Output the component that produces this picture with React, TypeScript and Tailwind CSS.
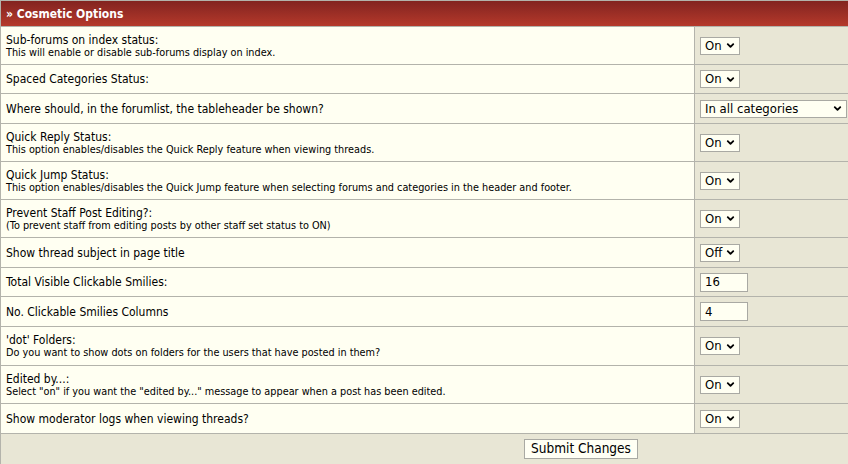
import { ChevronDown } from "lucide-react";

type Row = {
  title: string;
  desc?: string;
  h: string;
  control: "onoff" | "off" | "table" | "input";
  value?: string;
};

const rows: Row[] = [
  { title: "Sub-forums on index status:", desc: "This will enable or disable sub-forums display on index.", h: "h-[38px]", control: "onoff" },
  { title: "Spaced Categories Status:", h: "h-[29px]", control: "onoff" },
  { title: "Where should, in the forumlist, the tableheader be shown?", h: "h-[30px]", control: "table" },
  { title: "Quick Reply Status:", desc: "This option enables/disables the Quick Reply feature when viewing threads.", h: "h-[38px]", control: "onoff" },
  { title: "Quick Jump Status:", desc: "This option enables/disables the Quick Jump feature when selecting forums and categories in the header and footer.", h: "h-[38px]", control: "onoff" },
  { title: "Prevent Staff Post Editing?:", desc: "(To prevent staff from editing posts by other staff set status to ON)", h: "h-[38px]", control: "onoff" },
  { title: "Show thread subject in page title", h: "h-[30px]", control: "off" },
  { title: "Total Visible Clickable Smilies:", h: "h-[29px]", control: "input", value: "16" },
  { title: "No. Clickable Smilies Columns", h: "h-[30px]", control: "input", value: "4" },
  { title: "'dot' Folders:", desc: "Do you want to show dots on folders for the users that have posted in them?", h: "h-[39px]", control: "onoff" },
  { title: "Edited by...:", desc: "Select \"on\" if you want the \"edited by...\" message to appear when a post has been edited.", h: "h-[38px]", control: "onoff" },
  { title: "Show moderator logs when viewing threads?", h: "h-[30px]", control: "onoff" },
];

const font = { fontFamily: "'DejaVu Sans Condensed', 'DejaVu Sans', sans-serif" };

const FakeSelect = ({ label, wide }: { label: string; wide?: boolean }) => (
  <div
    className={`flex h-[18px] items-center justify-between border border-[#a9a9a3] bg-[#fffff2] pl-[4px] pr-[3px] text-[13px] text-black ${
      wide ? "w-[147px]" : "w-[40px]"
    }`}
  >
    <span>{label}</span>
    <ChevronDown className="h-[11px] w-[11px]" strokeWidth={4} />
  </div>
);

const Control = ({ row }: { row: Row }) => {
  if (row.control === "input") {
    return (
      <div className="flex h-[19px] w-[48px] items-center border border-[#a9a9a3] bg-[#fffff2] pl-[4px] text-[13px] text-black">
        {row.value}
      </div>
    );
  }
  if (row.control === "table") return <FakeSelect label="In all categories" wide />;
  if (row.control === "off") return <FakeSelect label="Off" />;
  return <FakeSelect label="On" />;
};

export default function App() {
  return (
    <div className="h-[464px] w-[848px] overflow-hidden bg-white" style={font}>
      <div className="w-[1161px] border-l border-t border-[#b3b3ab]">
        <div className="flex h-[26px] items-center border-b border-[#b3b3ab] bg-gradient-to-b from-[#832420] to-[#b5392b] pl-[5px] text-[12px] font-bold text-white">
          » Cosmetic Options
        </div>
        {rows.map((row) => (
          <div key={row.title} className={`grid grid-cols-[694px_1fr] border-b border-[#b3b3ab] ${row.h}`}>
            <div className="flex flex-col justify-center border-r border-[#b3b3ab] bg-[#fffff2] pl-[5px] text-black">
              <div className="text-[12px] leading-[14px]">{row.title}</div>
              {row.desc && <div className="text-[10.8px] leading-[12px]">{row.desc}</div>}
            </div>
            <div className="flex items-center bg-[#e8e6d5] pl-[5px]">
              <Control row={row} />
            </div>
          </div>
        ))}
        <div className="flex h-[40px] justify-center bg-[#e8e6d5] pt-[5px]">
          <button className="h-[20px] w-[114px] border border-[#a9a9a3] bg-[#fffff4] text-[13.5px] leading-none text-black">
            Submit Changes
          </button>
        </div>
      </div>
    </div>
  );
}
